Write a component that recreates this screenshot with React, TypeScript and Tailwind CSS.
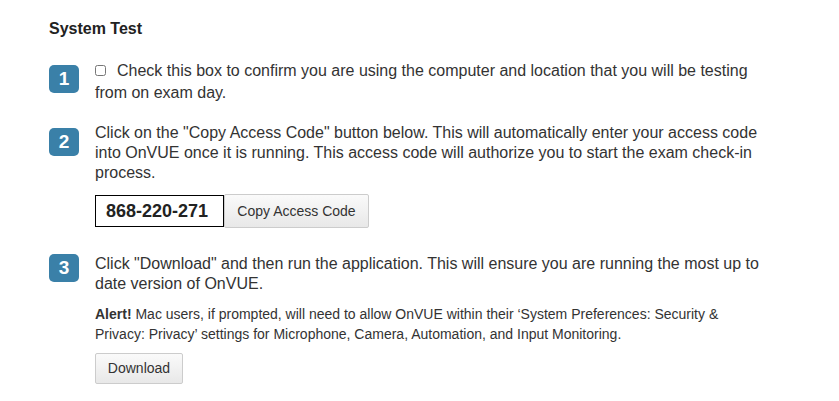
import * as React from "react";

function Badge({ n }: { n: number }) {
  return (
    <div className="flex h-[28px] w-[30px] shrink-0 items-center justify-center rounded-[5px] bg-[#3a80a8] text-[19px] font-bold text-white">
      {n}
    </div>
  );
}

export default function App() {
  return (
    <div className="min-h-screen bg-white pl-[49px] pt-[19px] pr-[74px] font-['Liberation_Sans',Arial,sans-serif] text-[#333]">
      <h2 className="text-[16px] font-bold leading-[20px] text-[#222]">System Test</h2>

      <div className="mt-[25px] flex gap-[16px]">
        <div className="pt-[1px]">
          <Badge n={1} />
        </div>
        <p className="-mt-[4px] text-[16px] leading-[22px]">
          <input type="checkbox" className="mr-[11px] h-[11px] w-[11px] align-[0px] accent-gray-500" />
          Check this box to confirm you are using the computer and location that you will be testing from on exam day.
        </p>
      </div>

      <div className="mt-[23px] flex gap-[16px]">
        <div className="pt-[1px]">
          <Badge n={2} />
        </div>
        <div className="-mt-[4px]">
          <p className="text-[16px] leading-[20px]">
            Click on the "Copy Access Code" button below. This will automatically enter your access code into OnVUE once it is running. This access code will authorize you to start the exam check-in process.
          </p>
          <div className="mt-[11px] flex items-center">
            <div className="flex h-[32px] w-[129px] items-center border border-black px-[10px] text-[18px] font-bold text-[#222]">
              868-220-271
            </div>
            <button className="h-[34px] w-[145px] rounded-[2px] border border-[#ccc] bg-gradient-to-b from-[#fafafa] to-[#e8e8e8] text-[14px] text-[#333]">
              Copy Access Code
            </button>
          </div>
        </div>
      </div>

      <div className="mt-[25px] flex gap-[16px]">
        <div className="pt-[1px]">
          <Badge n={3} />
        </div>
        <div className="mt-[1px]">
          <p className="text-[16px] leading-[20px]">
            Click "Download" and then run the application. This will ensure you are running the most up to date version of OnVUE.
          </p>
          <p className="mt-[10px] text-[14px] leading-[20px]">
            <span className="font-bold">Alert!</span> Mac users, if prompted, will need to allow OnVUE within their ‘System Preferences: Security &amp; Privacy: Privacy’ settings for Microphone, Camera, Automation, and Input Monitoring.
          </p>
          <button className="mt-[9px] h-[31px] w-[88px] rounded-[2px] border border-[#ccc] bg-gradient-to-b from-[#fafafa] to-[#e8e8e8] text-[14px] text-[#333]">
            Download
          </button>
        </div>
      </div>
    </div>
  );
}
